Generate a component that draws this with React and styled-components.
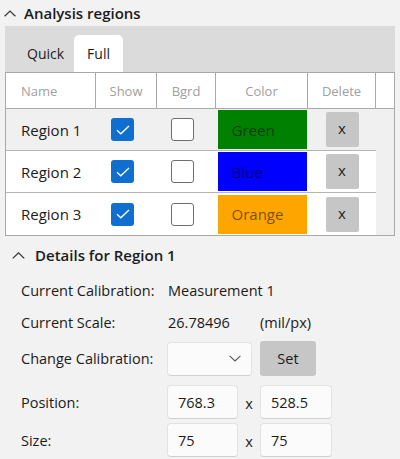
import React from "react";
import styled, { createGlobalStyle } from "styled-components";

const Global = createGlobalStyle`
  html, body { margin: 0; padding: 0; background: #f2f2f2; }
  body { font-family: "Open Sans", "Noto Sans", "Liberation Sans", sans-serif; color: #1b1b1b; }
  * { box-sizing: border-box; }
`;

const Page = styled.div`
  width: 400px;
  height: 459px;
  overflow: hidden;
  background: #f2f2f2;
`;

const SectionHeader = styled.div`
  display: flex;
  align-items: center;
  height: ${(p) => p.$h}px;
  padding-left: ${(p) => p.$indent}px;
  gap: ${(p) => p.$gap}px;
  font-size: 15px;
  font-weight: 600;
  color: #1b1b1b;
`;

const Chevron = ({ w = 12 }) => (
  <svg width={w} height={Math.round(w * 0.55)} viewBox="0 0 12 6.6" fill="none">
    <path d="M0.6 6 L6 0.8 L11.4 6" stroke="#333" strokeWidth="1.2" />
  </svg>
);

const TabStrip = styled.div`
  margin: 0 5px;
  height: 46px;
  background: #dbdbdb;
  display: flex;
  align-items: flex-end;
  padding-left: 10px;
`;

const Tab = styled.div`
  height: 37px;
  padding: 0 ${(p) => (p.$active ? "13px 0 13px" : "10px 0 12px")};
  display: flex;
  align-items: center;
  font-size: 14px;
  color: #1b1b1b;
  background: ${(p) => (p.$active ? "#ffffff" : "transparent")};
  border-radius: 5px 5px 0 0;
`;

const Table = styled.div`
  margin: 0 5px;
  border: 1px solid #a9a9a9;
  background: #f0f0f0;
`;

const Grid = styled.div`
  display: grid;
  grid-template-columns: 90px 61px 59px 92px 68px 1fr;
`;

const HeadRow = styled(Grid)`
  height: 36px;
  background: #ffffff;
  border-bottom: 1px solid #a9a9a9;
`;

const HeadCell = styled.div`
  display: flex;
  align-items: center;
  justify-content: ${(p) => (p.$left ? "flex-start" : "center")};
  padding-left: ${(p) => (p.$left ? 15 : 0)}px;
  font-size: 13px;
  color: #a0a0a0;
  border-right: ${(p) => (p.$last ? "none" : "1px solid #a9a9a9")};
`;

const BodyRow = styled(Grid)`
  height: ${(p) => p.$h}px;
  background: ${(p) => (p.$selected ? "#f0f0f0" : "#ffffff")};
`;

const Cell = styled.div`
  display: flex;
  align-items: center;
  justify-content: ${(p) => (p.$left ? "flex-start" : "center")};
  padding-left: ${(p) => (p.$left ? 15 : 0)}px;
  padding-right: ${(p) => p.$pr || 0}px;
  font-size: 15px;
  color: #1b1b1b;
  border-bottom: ${(p) => (p.$line ? "1px solid #b5b5b5" : "none")};
`;

const Filler = styled.div`
  background: #f0f0f0;
`;

const Check = styled.div`
  width: 23px;
  height: 23px;
  border-radius: 3px;
  display: flex;
  align-items: center;
  justify-content: center;
  background: ${(p) => (p.$on ? "#0f6fd0" : "#ffffff")};
  border: ${(p) => (p.$on ? "none" : "1.5px solid #6e6e6e")};
`;

const Swatch = styled.div`
  width: 89px;
  height: ${(p) => p.$h}px;
  background: ${(p) => p.$color};
  display: flex;
  align-items: center;
  padding-left: 14px;
  font-size: 15px;
  color: rgba(0, 0, 0, 0.55);
`;

const DelButton = styled.div`
  width: 33px;
  height: 35px;
  border-radius: 2px;
  background: #c6c6c6;
  display: flex;
  align-items: center;
  justify-content: center;
  font-size: 15px;
  color: #222;
  padding-bottom: 3px;
`;

const Details = styled.div`
  padding-top: 7px;
`;

const Form = styled.div`
  padding-left: 21px;
  display: flex;
  flex-direction: column;
`;

const FormRow = styled.div`
  display: flex;
  align-items: center;
  height: ${(p) => p.$h}px;
  margin-top: ${(p) => p.$mt || 0}px;
  font-size: 14.5px;
`;

const Label = styled.div`
  width: 146px;
  flex: none;
`;

const Value = styled.div`
  width: ${(p) => p.$w}px;
  padding-left: 1px;
  flex: none;
`;

const Input = styled.div`
  width: ${(p) => p.$w}px;
  height: 34px;
  flex: none;
  background: #fbfbfb;
  border: 1px solid #e2e2e2;
  border-bottom-color: #d0d0d0;
  border-radius: 4px;
  display: flex;
  align-items: center;
  justify-content: ${(p) => (p.$drop ? "flex-end" : "flex-start")};
  padding: 0 10px;
  font-size: 14.5px;
  color: #1b1b1b;
`;

const Times = styled.div`
  width: 22px;
  flex: none;
  text-align: center;
  font-size: 14.5px;
  padding-top: 3px;
`;

const SetButton = styled.div`
  margin-left: 8px;
  width: 56px;
  height: 35px;
  border-radius: 3px;
  background: #c6c6c6;
  display: flex;
  align-items: center;
  justify-content: center;
  font-size: 14.5px;
  color: #1b1b1b;
`;

const Tick = () => (
  <svg width="14" height="10" viewBox="0 0 14 10" fill="none">
    <path d="M1 5.2 L4.8 8.8 L13 1" stroke="#ffffff" strokeWidth="1.3" />
  </svg>
);

const DropArrow = () => (
  <svg width="12" height="7" viewBox="0 0 12 7" fill="none">
    <path d="M0.6 0.8 L6 6 L11.4 0.8" stroke="#555" strokeWidth="1.1" />
  </svg>
);

const regions = [
  { name: "Region 1", color: "#008000", label: "Green", selected: true },
  { name: "Region 2", color: "#0000ff", label: "Blue" },
  { name: "Region 3", color: "#ffa500", label: "Orange" },
];

export default function App() {
  return (
    <Page>
      <Global />
      <SectionHeader $h={26} $indent={4} $gap={8}>
        <Chevron w={12} />
        <span>Analysis regions</span>
      </SectionHeader>
      <TabStrip>
        <Tab>Quick</Tab>
        <Tab $active>Full</Tab>
      </TabStrip>
      <Table>
        <HeadRow>
          <HeadCell $left>Name</HeadCell>
          <HeadCell>Show</HeadCell>
          <HeadCell>Bgrd</HeadCell>
          <HeadCell>Color</HeadCell>
          <HeadCell>Delete</HeadCell>
          <HeadCell $last />
        </HeadRow>
        {regions.map((r, i) => {
          const line = i < regions.length - 1;
          return (
            <BodyRow key={r.name} $h={42} $selected={r.selected}>
              <Cell $left $line={line}>{r.name}</Cell>
              <Cell $line={line} $pr={8}>
                <Check $on>
                  <Tick />
                </Check>
              </Cell>
              <Cell $line={line} $pr={8}>
                <Check />
              </Cell>
              <Cell $line={line}>
                <Swatch $color={r.color} $h={39}>{r.label}</Swatch>
              </Cell>
              <Cell $line={line}>
                <DelButton>x</DelButton>
              </Cell>
              <Filler />
            </BodyRow>
          );
        })}
      </Table>
      <Details>
        <SectionHeader $h={24} $indent={12} $gap={10}>
          <Chevron w={13} />
          <span>Details for Region 1</span>
        </SectionHeader>
        <Form>
          <FormRow $h={32} $mt={7}>
            <Label>Current Calibration:</Label>
            <Value $w={150}>Measurement 1</Value>
          </FormRow>
          <FormRow $h={32}>
            <Label>Current Scale:</Label>
            <Value $w={92}>26.78496</Value>
            <Value $w={80}>(mil/px)</Value>
          </FormRow>
          <FormRow $h={35} $mt={3}>
            <Label>Change Calibration:</Label>
            <Input $w={85} $drop>
              <DropArrow />
            </Input>
            <SetButton>Set</SetButton>
          </FormRow>
          <FormRow $h={34} $mt={9}>
            <Label>Position:</Label>
            <Input $w={71}>768.3</Input>
            <Times>x</Times>
            <Input $w={72}>528.5</Input>
          </FormRow>
          <FormRow $h={34} $mt={4}>
            <Label>Size:</Label>
            <Input $w={71}>75</Input>
            <Times>x</Times>
            <Input $w={72}>75</Input>
          </FormRow>
        </Form>
      </Details>
    </Page>
  );
}
